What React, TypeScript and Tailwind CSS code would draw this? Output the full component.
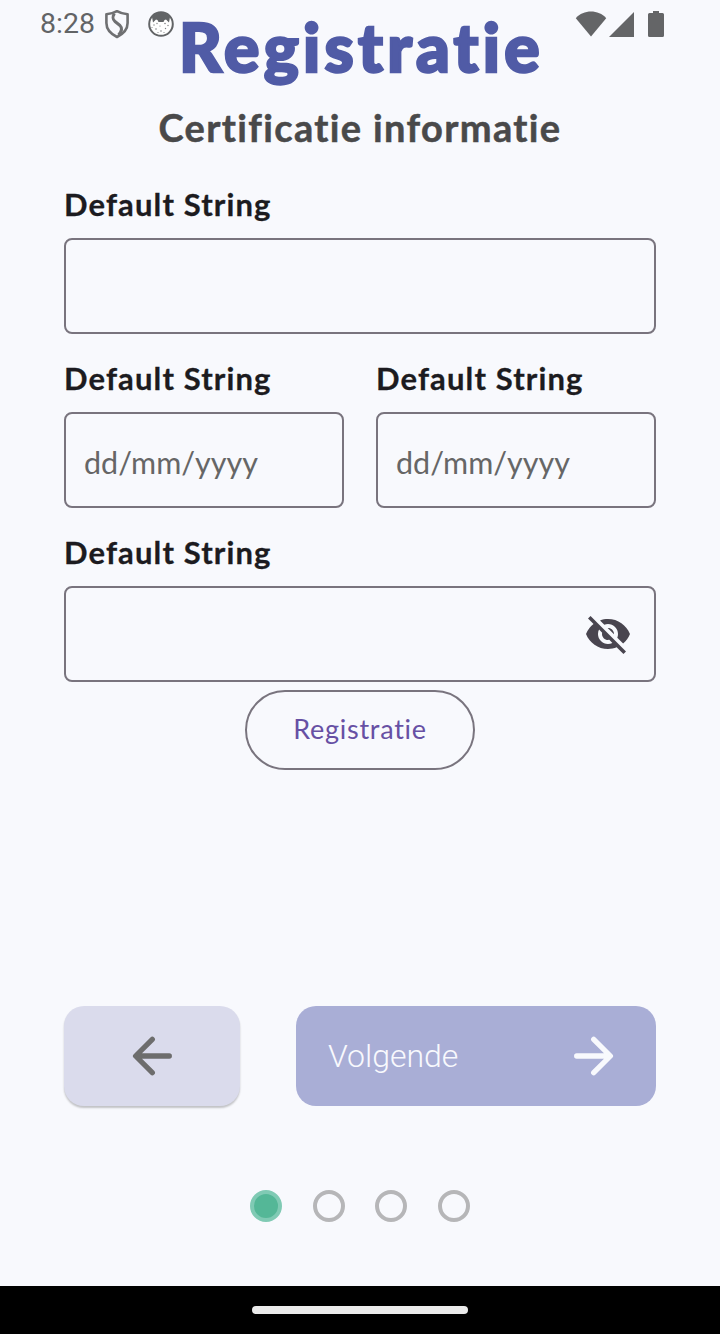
import { MdVisibilityOff } from "react-icons/md";

const rounded = "font-['Lato','Open_Sans',sans-serif] [font-variant-ligatures:none]";

function ShieldIcon() {
  return (
    <svg className="h-[30px] w-[26px]" viewBox="0 0 26 30" fill="none" stroke="#6f7072" strokeWidth="2.6" strokeLinejoin="round">
      <path d="M13 2.2 C16 4 20 5 23.6 5.2 V14 C23.6 20.5 19 25 13 28 C7 25 2.4 20.5 2.4 14 V5.2 C6 5 10 4 13 2.2Z" />
      <path d="M10.500 4.500 C8.500 7 8.500 10.500 11 12.500 L16 16.500 C18.500 19 18 22 14.500 26" strokeWidth="3" />
    </svg>
  );
}

function CatIcon() {
  return (
    <svg className="h-[26px] w-[26px]" viewBox="0 0 26 26">
      <circle cx="13" cy="13" r="11.800" fill="#fff" stroke="#626466" strokeWidth="2" />
      <path d="M4 6 C8 0 18 0 22 6 L21 11.500 L18 8.500 L16.500 9 L15.500 11 H10.500 L9.500 9 L8 8.500 L5 11.500Z" fill="#626466" />
      <g fill="#808284">
        <circle cx="6" cy="14" r=".7" /><circle cx="9" cy="12.500" r=".7" /><circle cx="17" cy="12.500" r=".8" />
        <circle cx="20" cy="14.500" r=".7" /><circle cx="8" cy="18" r=".8" /><circle cx="12" cy="15" r=".6" />
        <circle cx="13" cy="20" r=".8" /><circle cx="17.500" cy="17.500" r=".7" /><circle cx="10" cy="21.500" r=".6" />
        <circle cx="16" cy="21.500" r=".6" /><circle cx="4" cy="16.500" r=".6" />
      </g>
    </svg>
  );
}

function StatusBar() {
  return (
    <div className="absolute inset-x-0 top-0 flex h-12 items-center pr-14 pl-10">
      <span className="w-[64px] font-['Roboto',sans-serif] text-[28.500px] leading-[48px] text-[#626466]">8:28</span>
      <ShieldIcon />
      <div className="ml-[18px]"><CatIcon /></div>
      <svg className="ml-auto h-[28px] w-[90px]" viewBox="0 0 90 28" fill="#646567">
        <path d="M1.800 8.200 C9.500 -.7 24.500 -.7 32.200 8.200 L17 26.500Z" />
        <path d="M60 2 V27 H35Z" />
        <path d="M79 1 H85 V3 H88.500 Q90 3 90 4.500 V25.500 Q90 27 88.500 27 H75.500 Q74 27 74 25.500 V4.500 Q74 3 75.500 3 H79Z" />
      </svg>
    </div>
  );
}

function Field({ placeholder, secret }: { placeholder?: string; secret?: boolean }) {
  return (
    <label className="block min-w-0 flex-1">
      <span className={`${rounded} block h-[34px] text-[31px] leading-[33px] font-bold tracking-[1.120px] whitespace-nowrap text-[#1c1b20] [-webkit-text-stroke:0.3px_#1c1b20]`}>
        Default String
      </span>
      <span className="mt-4 flex h-24 items-center justify-between rounded-lg border-2 border-[#79747e] pr-[22px] pl-[18px]">
        <span className={`${rounded} pt-[3px] text-[30.500px] leading-10 text-[#666]`}>{placeholder}</span>
        {secret && <MdVisibilityOff className="size-12 text-[#49454f]" />}
      </span>
    </label>
  );
}

function Arrow({ forward }: { forward?: boolean }) {
  return (
    <svg className="h-10 w-10" viewBox="0 0 40 40" fill="none" stroke={forward ? "#f8f9fd" : "#6d6d6d"} strokeWidth="5.300" strokeLinecap="round" strokeLinejoin="round">
      {forward ? <path d="M2.700 20 H36 M19.700 3.300 L36.400 20 L19.700 36.700" /> : <path d="M37.300 20 H4 M20.300 3.300 L3.600 20 L20.300 36.700" />}
    </svg>
  );
}

export default function App() {
  return (
    <div className="relative flex h-[1334px] w-[720px] flex-col overflow-hidden bg-[#f8f9fd]">
      <main className="flex flex-1 flex-col px-16">
        <h1 className={`${rounded} h-[96px] pl-[3px] text-center text-[66px] leading-[93px] font-black tracking-[4.300px] whitespace-nowrap text-[#505ba6] [-webkit-text-stroke:2.500px_#505ba6]`}>Registratie</h1>
        <h2 className={`${rounded} h-[64px] text-center text-[38px] leading-[63px] font-bold tracking-[1.360px] whitespace-nowrap text-[#49494a] [-webkit-text-stroke:0.5px_#49494a]`}>Certificatie informatie</h2>
        <form className="mt-7 flex flex-col gap-7">
          <Field />
          <div className="flex gap-8">
            <Field placeholder="dd/mm/yyyy" />
            <Field placeholder="dd/mm/yyyy" />
          </div>
          <Field secret />
        </form>
        <button className={`${rounded} mt-2 h-20 w-[230px] self-center rounded-full border-2 border-[#79747e] pb-[2px] text-[27px] tracking-[0.750px] text-[#6750a4]`}>Registratie</button>
        <div className="mt-[236px] flex justify-between">
          <button className="flex h-[100px] w-44 items-center justify-center rounded-[20px] bg-[#dadbec] shadow-[0_2px_2px_rgba(0,0,0,0.22)]">
            <Arrow />
          </button>
          <button className="flex h-[100px] w-[360px] items-center justify-between rounded-[20px] bg-[#a9aed6] pr-[42px] pl-8">
            <span className="font-['Roboto',sans-serif] text-[32px] font-light text-[#f8f9fd]">Volgende</span>
            <Arrow forward />
          </button>
        </div>
        <div className="mt-[84px] flex gap-[30.400px] self-center">
          <span className="size-8 rounded-full border-4 border-[#80cab4] bg-[#54b797]" />
          <span className="size-8 rounded-full border-4 border-[#b6b6b8]" />
          <span className="size-8 rounded-full border-4 border-[#b6b6b8]" />
          <span className="size-8 rounded-full border-4 border-[#b6b6b8]" />
        </div>
      </main>
      <nav className="flex h-12 items-center justify-center bg-black">
        <span className="h-2 w-[216px] rounded-full bg-[#ebebeb]" />
      </nav>
      <StatusBar />
    </div>
  );
}
